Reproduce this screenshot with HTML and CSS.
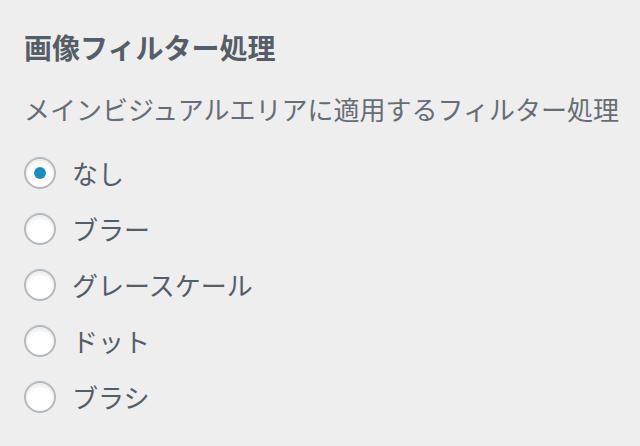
FILE: index.html
```html
<!DOCTYPE html>
<html lang="ja">
<head>
    <meta charset="UTF-8">
    <title>画像フィルター処理</title>
    <link rel="stylesheet" href="styles.css">
</head>
<body>
    <div class="control">
        <h2 class="control-title">画像フィルター処理</h2>
        <p class="description">メインビジュアルエリアに適用するフィルター処理</p>
        <ul class="choices">
            <li><label><input type="radio" name="filter" value="none" checked> なし</label></li>
            <li><label><input type="radio" name="filter" value="blur"> ブラー</label></li>
            <li><label><input type="radio" name="filter" value="grayscale"> グレースケール</label></li>
            <li><label><input type="radio" name="filter" value="dot"> ドット</label></li>
            <li><label><input type="radio" name="filter" value="brush"> ブラシ</label></li>
        </ul>
    </div>
</body>
</html>
```

FILE: styles.css
```css
body {
    margin: 0;
    background: #eeeeee;
    font-family: "Noto Sans CJK JP", "Noto Sans", sans-serif;
    color: #555d66;
}

.control {
    padding: 25px 12px 0 24px;
}

.control-title {
    margin: 0;
    font-size: 28px;
    line-height: 44px;
    font-weight: bold;
}

.description {
    margin: 20px 0 0;
    font-size: 26px;
    line-height: 40px;
    color: #666d74;
    white-space: nowrap;
}

.choices {
    list-style: none;
    margin: 16px 0 0;
    padding: 0;
}

.choices li {
    height: 56px;
    display: flex;
    align-items: center;
}

.choices label {
    display: flex;
    align-items: center;
    gap: 8px;
    font-size: 26px;
    line-height: 40px;
}

input[type="radio"] {
    appearance: none;
    margin: 0 8px 0 0;
    width: 32px;
    height: 32px;
    border: 2px solid #b4b9be;
    border-radius: 50%;
    background: #fff;
    box-shadow: inset 0 2px 4px rgba(0, 0, 0, 0.1);
    display: flex;
    align-items: center;
    justify-content: center;
}

input[type="radio"]:checked::before {
    content: '';
    width: 12px;
    height: 12px;
    border-radius: 50%;
    background: #1e8cbe;
}
```
